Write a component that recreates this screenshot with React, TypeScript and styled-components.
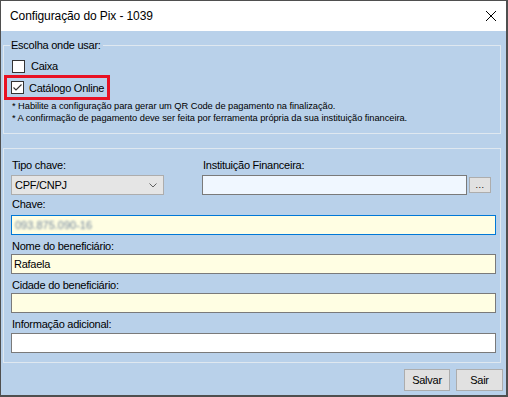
import React from 'react';
import styled, { createGlobalStyle } from 'styled-components';

const GlobalStyle = createGlobalStyle`
  html, body { margin: 0; padding: 0; background: #ffffff; }
  body { font-family: "Liberation Sans", Arial, sans-serif; font-size: 11px; color: #000; }
`;

const Window = styled.div`
  width: 508px;
  height: 397px;
  box-sizing: border-box;
  border-style: solid;
  border-color: #4f4f4f;
  border-width: 1px 2px 2px 1px;
  display: flex;
  flex-direction: column;
  overflow: hidden;
`;

const TitleBar = styled.div`
  height: 30px;
  flex-shrink: 0;
  background: #ffffff;
  display: flex;
  align-items: center;
  justify-content: space-between;
  padding: 0 9px 0 9px;
  font-size: 12px;
  letter-spacing: -0.1px;
  color: #000;
`;

const CloseIcon = styled.svg`
  width: 10px;
  height: 10px;
  margin-right: 1px;
`;

const Body = styled.div`
  flex: 1;
  background: #b9d1ea;
  padding: 8px 5px 0 2px;
  display: flex;
  flex-direction: column;
  letter-spacing: -0.25px;
`;

const Group = styled.fieldset<{ $top?: number }>`
  margin: ${p => p.$top ?? 0}px 0 0 0;
  padding: ${p => (p.$top ? '10px 4px 9px 7px' : '0 8px 9px 8px')};
  border: 1px solid #dfe8f0;
  min-width: 0;
  display: flex;
  flex-direction: column;
  align-items: stretch;
`;

const Legend = styled.legend`
  margin-left: -2px;
  padding: 0 2px 0 1px;
  line-height: 13px;
`;

const CheckRow = styled.div`
  display: flex;
  align-items: center;
  height: 16px;
  margin-top: 6px;
  gap: 6px;
  white-space: nowrap;
`;

const HighlightRow = styled.div`
  display: flex;
  align-items: center;
  gap: 5px;
  box-sizing: border-box;
  width: 106px;
  height: 25px;
  margin: 1px 0 0 -8px;
  padding-left: 4px;
  border: 3px solid #e81123;
  white-space: nowrap;
`;

const Box = styled.span`
  width: 13px;
  height: 13px;
  box-sizing: border-box;
  border: 1px solid #333333;
  background: #ffffff;
  display: flex;
  align-items: center;
  justify-content: center;
  flex-shrink: 0;
`;

const Note = styled.div`
  font-size: 9.3px;
  line-height: 12px;
  letter-spacing: -0.05px;
  white-space: nowrap;
  color: #000;
`;

const TopRow = styled.div`
  display: flex;
  gap: 38px;
`;

const Column = styled.div<{ $width?: number }>`
  display: flex;
  flex-direction: column;
  width: ${p => (p.$width ? `${p.$width}px` : 'auto')};
  flex: ${p => (p.$width ? 'none' : '1')};
`;

const Label = styled.div<{ $mt?: number }>`
  line-height: 13px;
  margin-top: ${p => p.$mt ?? 0}px;
  padding-left: 1px;
  white-space: nowrap;
`;

const Select = styled.div`
  margin-top: 3px;
  height: 20px;
  box-sizing: border-box;
  background: #e5e5e5;
  border: 1px solid #adadad;
  display: flex;
  align-items: center;
  justify-content: space-between;
  padding: 0 6px 0 3px;
`;

const InputRow = styled.div`
  margin-top: 3px;
  display: flex;
  align-items: flex-start;
  gap: 2px;
  padding-right: 5px;
`;

const Input = styled.div<{ $bg?: string; $border?: string; $mt?: number; $grow?: boolean }>`
  margin-top: ${p => p.$mt ?? 0}px;
  height: 20px;
  box-sizing: border-box;
  background: ${p => p.$bg ?? '#ffffff'};
  border: 1px solid ${p => p.$border ?? '#7a7a7a'};
  display: flex;
  align-items: center;
  padding-left: 2px;
  flex: ${p => (p.$grow ? '1' : 'none')};
`;

const Blurred = styled.span`
  color: #6f849b;
  filter: blur(1.1px);
  padding-left: 1px;
  letter-spacing: 0;
`;

const SmallButton = styled.div`
  width: 22px;
  height: 16px;
  margin-top: 2px;
  box-sizing: border-box;
  background: #e1e1e1;
  border: 1px solid #adadad;
  display: flex;
  align-items: center;
  justify-content: center;
  font-size: 9px;
  letter-spacing: 0.5px;
`;

const Footer = styled.div`
  display: flex;
  justify-content: flex-end;
  gap: 6px;
  margin: 6px -2px 0 0;
`;

const Button = styled.div<{ $width: number }>`
  width: ${p => p.$width}px;
  height: 22px;
  box-sizing: border-box;
  background: #e1e1e1;
  border: 1px solid #adadad;
  display: flex;
  align-items: center;
  justify-content: center;
`;

const Check = ({ checked }: { checked?: boolean }) => (
  <Box>
    {checked && (
      <svg width="11" height="11" viewBox="0 0 11 11">
        <path d="M1.5 5.5 L4 8 L9.5 2.5" fill="none" stroke="#333" strokeWidth="1.1" />
      </svg>
    )}
  </Box>
);

const Chevron = () => (
  <svg width="8" height="5" viewBox="0 0 8 5">
    <path d="M0.5 0.5 L4 4 L7.5 0.5" fill="none" stroke="#606060" strokeWidth="1" />
  </svg>
);

export default function App() {
  return (
    <>
      <GlobalStyle />
      <Window>
        <TitleBar>
          <span>Configuração do Pix - 1039</span>
          <CloseIcon viewBox="0 0 10 10">
            <path d="M0 0 L10 10 M10 0 L0 10" stroke="#000" strokeWidth="1" />
          </CloseIcon>
        </TitleBar>
        <Body>
          <Group>
            <Legend>Escolha onde usar:</Legend>
            <CheckRow>
              <Check />
              <span>Caixa</span>
            </CheckRow>
            <HighlightRow>
              <Check checked />
              <span>Catálogo Online</span>
            </HighlightRow>
            <Note>* Habilite a configuração para gerar um QR Code de pagamento na finalização.</Note>
            <Note>* A confirmação de pagamento deve ser feita por ferramenta própria da sua instituição financeira.</Note>
          </Group>

          <Group $top={14}>
            <TopRow>
              <Column $width={153}>
                <Label>Tipo chave:</Label>
                <Select>
                  <span>CPF/CNPJ</span>
                  <Chevron />
                </Select>
              </Column>
              <Column>
                <Label>Instituição Financeira:</Label>
                <InputRow>
                  <Input $grow $bg="#f0f7ff" />
                  <SmallButton>...</SmallButton>
                </InputRow>
              </Column>
            </TopRow>

            <Label $mt={3}>Chave:</Label>
            <Input $mt={4} $bg="#fffee3" $border="#0078d7">
              <Blurred>093.875.090-16</Blurred>
            </Input>

            <Label $mt={5}>Nome do beneficiário:</Label>
            <Input $mt={1} $bg="#fffee3">Rafaela</Input>

            <Label $mt={5}>Cidade do beneficiário:</Label>
            <Input $mt={1} $bg="#fffee3" />

            <Label $mt={5}>Informação adicional:</Label>
            <Input $mt={2} />
          </Group>

          <Footer>
            <Button $width={46}>Salvar</Button>
            <Button $width={47}>Sair</Button>
          </Footer>
        </Body>
      </Window>
    </>
  );
}
